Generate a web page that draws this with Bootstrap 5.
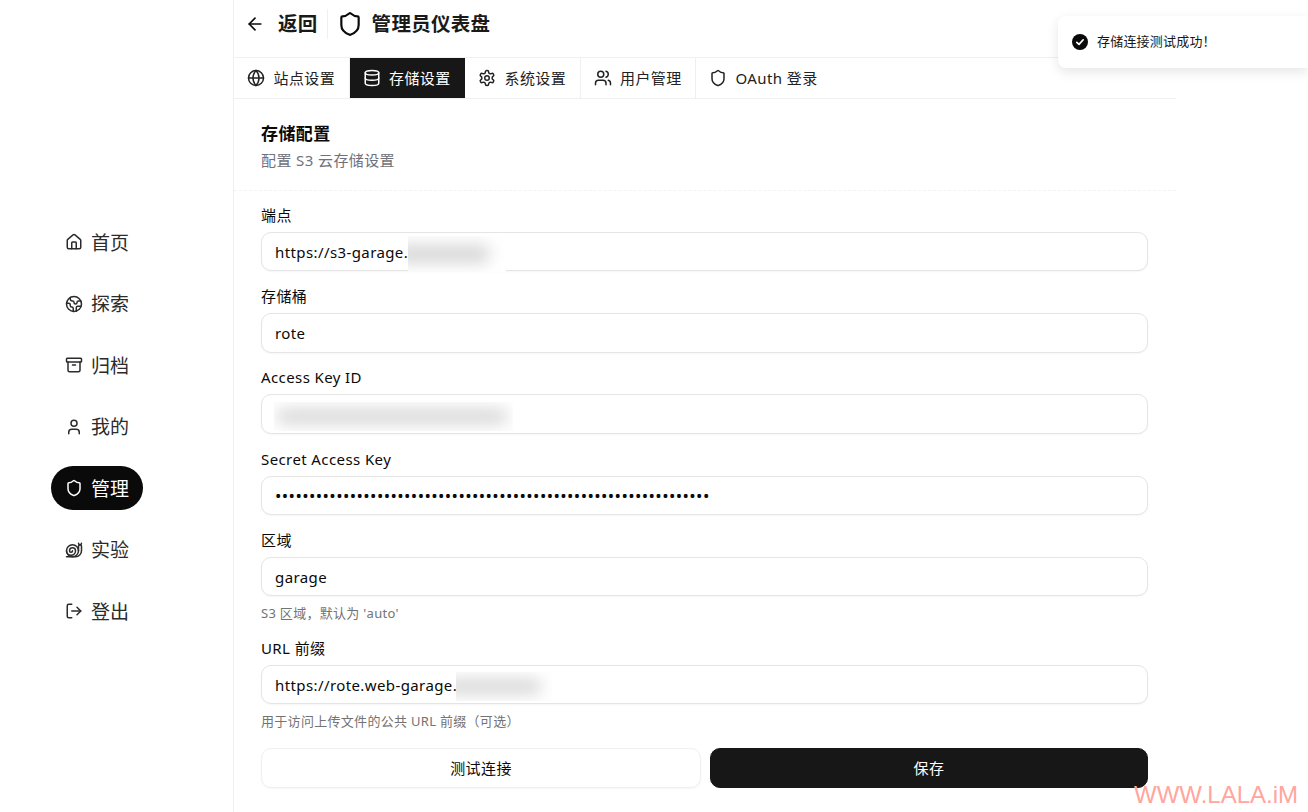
<!doctype html>
<html lang="zh-CN">
<head>
<meta charset="utf-8">
<title>管理员仪表盘</title>
<link rel="stylesheet" href="https://cdn.jsdelivr.net/npm/bootstrap@5.3.0/dist/css/bootstrap.min.css">
<style>
html,body{height:812px;overflow:hidden}
body{font-family:"Noto Sans","Noto Sans CJK SC",sans-serif;color:#0a0a0a;background:#fff;font-size:15px;letter-spacing:.4px}
.ico{width:18px;height:18px;fill:none;stroke:currentColor;stroke-width:2;stroke-linecap:round;stroke-linejoin:round;flex:none}
.ico-back{width:20px;height:20px}
.ico-big{width:26px;height:26px;margin-right:9px}
.side-col{width:234px;height:812px;border-right:1px solid #f0f0f0;padding:220px 0 0 51px;flex:none}
.side-link{height:44px;padding:0 14px;gap:8px;font-size:19px;letter-spacing:0;color:#2b2b2b;border-radius:22px;text-decoration:none;margin-bottom:17.5px;width:92px;white-space:nowrap}
.side-link span{padding-top:2px}
.side-link.on{background:#0a0a0a;color:#fff}
.main-col{width:942px;flex:none}
.top-bar{height:58px;padding:0 0 9px 11px;border-bottom:1px solid #f0f0f0}
.ttl{font-size:19.5px;font-weight:700;color:#1a1a1a;letter-spacing:.3px}
.ttl-back{margin-left:13px}
.top-sep{width:1px;height:30px;background:#f0f0f0;margin:0 9px}
.tab-row{height:41px;border-bottom:1px solid #f0f0f0}
.tab-item{padding:0 13.4px 0 13px;gap:8.5px;font-size:15px;color:#222;border-right:1px solid #f0f0f0;text-decoration:none;height:40px;flex:none}
.tab-item.on{background:#171717;color:#fff;border-right-color:#171717}
.tab-item.last{border-right:0}
.sec-head{height:92px;padding:22px 27px 0;border-bottom:1px dashed #f3f3f3}
.sec-title{font-size:17px;font-weight:700;line-height:26px;color:#0a0a0a}
.sec-sub{font-size:15px;color:#71717a;line-height:20px;margin-top:3px}
.form-zone{padding:13.9px 28px 0 27px}
.f-label{font-size:15px;line-height:20px;margin-bottom:7px;display:block;color:#0a0a0a}
.f-input{height:39.5px;border:1px solid #e5e5e5;border-radius:10px;font-size:15px;padding:0 13px;color:#0a0a0a;box-shadow:0 1px 2px rgba(0,0,0,.04);letter-spacing:.4px}
.f-secret{font-size:17px}
.f-group{margin-bottom:14.75px;position:relative}
.f-group.g-hinted{margin-bottom:16px}
.f-group.g-last{margin-bottom:18.5px}
.f-hint{font-size:13px;color:#737373;line-height:18px;margin-top:7.5px;letter-spacing:.3px}
.mask{position:absolute;overflow:hidden;background:#fff}
.mask i{display:block;position:absolute;background:#d6d6d6;filter:blur(8px);border-radius:8px}
.mask-a{left:147px;top:31px;width:98px;height:36px}
.mask-a i{left:-14px;top:9px;width:96px;height:18px}
.mask-b{left:13px;top:35px;width:239px;height:29px}
.mask-b i{left:2px;top:7px;width:232px;height:15px}
.mask-c{left:195px;top:34px;width:96px;height:29px}
.mask-c i{left:-14px;top:7px;width:100px;height:15px}
.act-row{gap:9px}
.act-btn{height:40px;border-radius:10px;font-size:15px;letter-spacing:.4px;display:flex;align-items:center;justify-content:center}
.act-light{width:440px;background:#fff;border:1px solid #f0f0f0;color:#0a0a0a;box-shadow:0 1px 2px rgba(0,0,0,.04)}
.act-dark{width:438px;background:#171717;border:1px solid #171717;color:#fff}
.toast-box{position:absolute;left:1058px;top:16px;width:250px;height:52px;background:#fff;border-radius:8px 0 0 8px;box-shadow:0 4px 12px rgba(0,0,0,.1);padding-left:14px;gap:9px;font-size:13px;letter-spacing:.2px;color:#171717}
.wm{position:absolute;left:1134px;top:779px;font:24px/32px "Liberation Sans",sans-serif;letter-spacing:0;color:#ffa69e;white-space:nowrap}
</style>
</head>
<body>
<svg width="0" height="0" class="position-absolute">
<defs>
<symbol id="i-home" viewBox="0 0 24 24"><path d="M15 21v-8a1 1 0 0 0-1-1h-4a1 1 0 0 0-1 1v8"/><path d="M3 10a2 2 0 0 1 .709-1.528l7-5.999a2 2 0 0 1 2.582 0l7 5.999A2 2 0 0 1 21 10v9a2 2 0 0 1-2 2H5a2 2 0 0 1-2-2z"/></symbol>
<symbol id="i-earth" viewBox="0 0 24 24"><path d="M21.54 15H17a2 2 0 0 0-2 2v4.54"/><path d="M7 3.34V5a3 3 0 0 0 3 3a2 2 0 0 1 2 2c0 1.1.9 2 2 2a2 2 0 0 0 2-2c0-1.1.9-2 2-2h3.17"/><path d="M11 21.95V18a2 2 0 0 0-2-2a2 2 0 0 1-2-2v-1a2 2 0 0 0-2-2H2.05"/><circle cx="12" cy="12" r="10"/></symbol>
<symbol id="i-archive" viewBox="0 0 24 24"><rect x="2" y="3" width="20" height="5" rx="1"/><path d="M4 8v11a2 2 0 0 0 2 2h12a2 2 0 0 0 2-2V8"/><path d="M10 12h4"/></symbol>
<symbol id="i-user" viewBox="0 0 24 24"><path d="M19 21v-2a4 4 0 0 0-4-4H9a4 4 0 0 0-4 4v2"/><circle cx="12" cy="7" r="4"/></symbol>
<symbol id="i-shield" viewBox="0 0 24 24"><path d="M20 13c0 5-3.5 7.5-7.66 8.95a1 1 0 0 1-.67-.01C7.5 20.5 4 18 4 13V6a1 1 0 0 1 1-1c2 0 4.5-1.2 6.24-2.72a1.17 1.17 0 0 1 1.52 0C14.51 3.81 17 5 19 5a1 1 0 0 1 1 1z"/></symbol>
<symbol id="i-snail" viewBox="0 0 24 24"><path d="M2 13a6 6 0 1 0 12 0 4 4 0 1 0-8 0 2 2 0 0 0 4 0"/><circle cx="10" cy="13" r="8"/><path d="M2 21h12c4.4 0 8-3.6 8-8V7a2 2 0 1 0-4 0v6"/><path d="M18 3 19.1 5.2"/><path d="M22 3 20.9 5.2"/></symbol>
<symbol id="i-logout" viewBox="0 0 24 24"><path d="m16 17 5-5-5-5"/><path d="M21 12H9"/><path d="M9 21H5a2 2 0 0 1-2-2V5a2 2 0 0 1 2-2h4"/></symbol>
<symbol id="i-globe" viewBox="0 0 24 24"><circle cx="12" cy="12" r="10"/><path d="M12 2a14.5 14.5 0 0 0 0 20 14.5 14.5 0 0 0 0-20"/><path d="M2 12h20"/></symbol>
<symbol id="i-db" viewBox="0 0 24 24"><ellipse cx="12" cy="5" rx="9" ry="3"/><path d="M3 5V19A9 3 0 0 0 21 19V5"/><path d="M3 12A9 3 0 0 0 21 12"/></symbol>
<symbol id="i-gear" viewBox="0 0 24 24"><path d="M12.22 2h-.44a2 2 0 0 0-2 2v.18a2 2 0 0 1-1 1.73l-.43.25a2 2 0 0 1-2 0l-.15-.08a2 2 0 0 0-2.73.73l-.22.38a2 2 0 0 0 .73 2.73l.15.1a2 2 0 0 1 1 1.72v.51a2 2 0 0 1-1 1.74l-.15.09a2 2 0 0 0-.73 2.73l.22.38a2 2 0 0 0 2.73.73l.15-.08a2 2 0 0 1 2 0l.43.25a2 2 0 0 1 1 1.73V20a2 2 0 0 0 2 2h.44a2 2 0 0 0 2-2v-.18a2 2 0 0 1 1-1.73l.43-.25a2 2 0 0 1 2 0l.15.08a2 2 0 0 0 2.73-.73l.22-.39a2 2 0 0 0-.73-2.73l-.15-.08a2 2 0 0 1-1-1.74v-.5a2 2 0 0 1 1-1.74l.15-.09a2 2 0 0 0 .73-2.73l-.22-.38a2 2 0 0 0-2.73-.73l-.15.08a2 2 0 0 1-2 0l-.43-.25a2 2 0 0 1-1-1.73V4a2 2 0 0 0-2-2z"/><circle cx="12" cy="12" r="3"/></symbol>
<symbol id="i-users" viewBox="0 0 24 24"><path d="M16 21v-2a4 4 0 0 0-4-4H6a4 4 0 0 0-4 4v2"/><circle cx="9" cy="7" r="4"/><path d="M22 21v-2a4 4 0 0 0-3-3.87"/><path d="M16 3.13a4 4 0 0 1 0 7.75"/></symbol>
<symbol id="i-back" viewBox="0 0 24 24"><path d="m12 19-7-7 7-7"/><path d="M19 12H5"/></symbol>
</defs>
</svg>

<div class="d-flex">
  <nav class="side-col">
    <a class="side-link d-flex align-items-center" href="#"><svg class="ico"><use href="#i-home"/></svg><span>首页</span></a>
    <a class="side-link d-flex align-items-center" href="#"><svg class="ico"><use href="#i-earth"/></svg><span>探索</span></a>
    <a class="side-link d-flex align-items-center" href="#"><svg class="ico"><use href="#i-archive"/></svg><span>归档</span></a>
    <a class="side-link d-flex align-items-center" href="#"><svg class="ico"><use href="#i-user"/></svg><span>我的</span></a>
    <a class="side-link on d-flex align-items-center" href="#"><svg class="ico"><use href="#i-shield"/></svg><span>管理</span></a>
    <a class="side-link d-flex align-items-center" href="#"><svg class="ico"><use href="#i-snail"/></svg><span>实验</span></a>
    <a class="side-link d-flex align-items-center" href="#"><svg class="ico"><use href="#i-logout"/></svg><span>登出</span></a>
  </nav>

  <main class="main-col">
    <header class="top-bar d-flex align-items-center">
      <svg class="ico ico-back"><use href="#i-back"/></svg>
      <span class="ttl ttl-back">返回</span>
      <span class="top-sep"></span>
      <svg class="ico ico-big"><use href="#i-shield"/></svg>
      <span class="ttl">管理员仪表盘</span>
    </header>
    <div class="tab-row d-flex">
      <a class="tab-item d-flex align-items-center" href="#"><svg class="ico"><use href="#i-globe"/></svg>站点设置</a>
      <a class="tab-item on d-flex align-items-center" href="#"><svg class="ico"><use href="#i-db"/></svg>存储设置</a>
      <a class="tab-item d-flex align-items-center" href="#"><svg class="ico"><use href="#i-gear"/></svg>系统设置</a>
      <a class="tab-item d-flex align-items-center" href="#"><svg class="ico"><use href="#i-users"/></svg>用户管理</a>
      <a class="tab-item last d-flex align-items-center" href="#"><svg class="ico"><use href="#i-shield"/></svg>OAuth 登录</a>
    </div>
    <div class="sec-head">
      <div class="sec-title">存储配置</div>
      <div class="sec-sub">配置 S3 云存储设置</div>
    </div>
    <form class="form-zone">
      <div class="f-group">
        <label class="f-label">端点</label>
        <input class="form-control f-input" value="https://s3-garage.">
        <div class="mask mask-a"><i></i></div>
      </div>
      <div class="f-group">
        <label class="f-label">存储桶</label>
        <input class="form-control f-input" value="rote">
      </div>
      <div class="f-group">
        <label class="f-label">Access Key ID</label>
        <input class="form-control f-input" value="">
        <div class="mask mask-b"><i></i></div>
      </div>
      <div class="f-group">
        <label class="f-label">Secret Access Key</label>
        <input class="form-control f-input f-secret" type="password" value="aaaaaaaaaaaaaaaaaaaaaaaaaaaaaaaaaaaaaaaaaaaaaaaaaaaaaaaaaaaaaaaa">
      </div>
      <div class="f-group g-hinted">
        <label class="f-label">区域</label>
        <input class="form-control f-input" value="garage">
        <div class="f-hint">S3 区域，默认为 'auto'</div>
      </div>
      <div class="f-group g-last">
        <label class="f-label">URL 前缀</label>
        <input class="form-control f-input" value="https://rote.web-garage.">
        <div class="mask mask-c"><i></i></div>
        <div class="f-hint">用于访问上传文件的公共 URL 前缀（可选）</div>
      </div>
      <div class="d-flex act-row">
        <button type="button" class="btn act-btn act-light">测试连接</button>
        <button type="button" class="btn act-btn act-dark">保存</button>
      </div>
    </form>
  </main>
</div>

<div class="toast-box d-flex align-items-center">
  <svg width="16" height="16" viewBox="0 0 16 16"><circle cx="8" cy="8" r="8" fill="#0a0a0a"/><path d="M4.8 8.3 7 10.4l4.2-4.6" fill="none" stroke="#fff" stroke-width="1.7" stroke-linecap="round" stroke-linejoin="round"/></svg>
  <span>存储连接测试成功！</span>
</div>
<div class="wm">WWW.LALA.iM</div>
<script src="https://cdn.jsdelivr.net/npm/bootstrap@5.3.0/dist/js/bootstrap.bundle.min.js"></script>
</body>
</html>
